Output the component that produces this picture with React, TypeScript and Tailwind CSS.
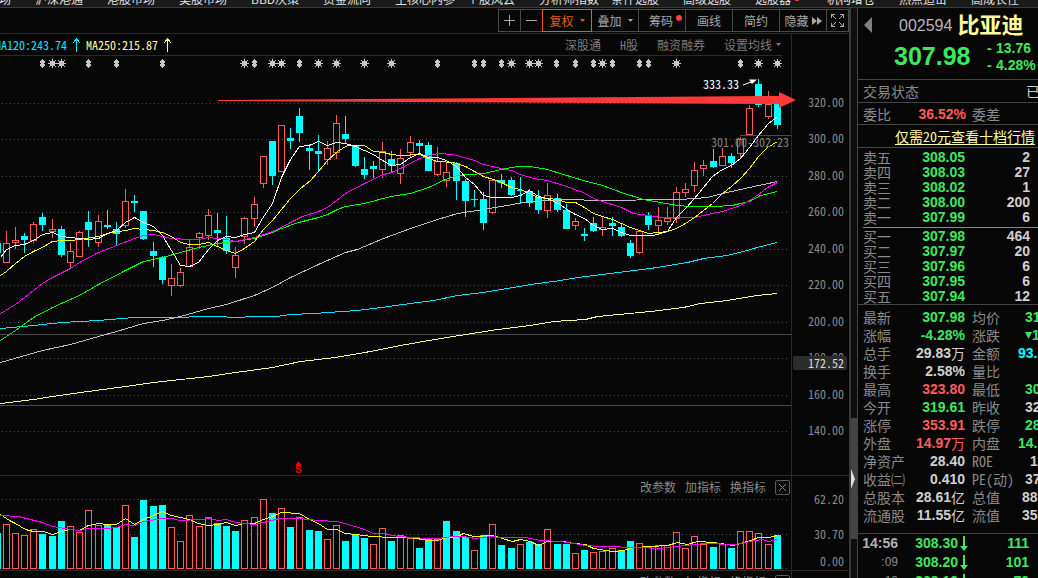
import React from "react";

type Candle = [hi: number, lo: number, top: number, bottom: number, up: 0 | 1];

const candles: Candle[] = [
  [231, 263, 243, 263, 1], [227, 249, 240, 243, 1], [233, 253, 236, 240, 0], [222, 243, 224, 241, 1],
  [213, 231, 217, 225, 0], [219, 238, 229, 232, 1], [226, 257, 229, 255, 0], [243, 269, 251, 263, 1],
  [231, 257, 232, 257, 1], [211, 247, 222, 230, 0], [215, 247, 221, 243, 1], [210, 229, 225, 227, 0],
  [222, 246, 229, 234, 0], [189, 228, 201, 226, 1], [195, 212, 201, 203, 0], [211, 240, 211, 239, 0],
  [242, 267, 251, 256, 0], [256, 284, 257, 280, 0], [264, 296, 278, 286, 1], [268, 287, 272, 286, 1],
  [240, 267, 247, 267, 1], [232, 249, 233, 238, 1], [209, 240, 215, 236, 1], [213, 246, 230, 233, 0],
  [216, 254, 238, 251, 0], [247, 278, 255, 268, 1], [217, 244, 218, 237, 1], [197, 227, 204, 219, 1],
  [156, 188, 156, 184, 1], [141, 185, 141, 176, 0], [125, 172, 125, 172, 1], [128, 149, 138, 141, 0],
  [108, 142, 116, 133, 0], [144, 170, 148, 151, 0], [135, 172, 151, 154, 0], [141, 165, 148, 160, 1],
  [115, 159, 123, 153, 1], [116, 143, 134, 139, 0], [145, 167, 145, 166, 0], [157, 179, 169, 175, 0],
  [161, 178, 166, 169, 0], [142, 178, 151, 170, 1], [151, 172, 159, 166, 0], [149, 184, 158, 174, 1],
  [136, 157, 142, 153, 1], [140, 155, 143, 146, 0], [142, 171, 145, 171, 0], [147, 176, 161, 175, 1],
  [162, 187, 172, 181, 1], [162, 200, 163, 181, 0], [179, 217, 181, 201, 0], [190, 207, 199, 200, 0],
  [192, 230, 199, 223, 0], [179, 214, 180, 213, 1], [174, 188, 180, 183, 0], [177, 196, 180, 195, 0],
  [177, 203, 190, 191, 0], [189, 207, 191, 203, 0], [190, 214, 197, 210, 0], [183, 218, 195, 211, 1],
  [194, 212, 198, 210, 0], [204, 229, 210, 229, 0], [218, 230, 221, 226, 1], [228, 241, 234, 236, 0],
  [217, 232, 223, 231, 0], [217, 236, 227, 230, 1], [217, 236, 223, 226, 0], [223, 237, 227, 236, 0],
  [240, 258, 243, 256, 0], [231, 254, 231, 253, 1], [212, 230, 216, 225, 0], [207, 234, 220, 226, 1],
  [207, 225, 218, 222, 1], [187, 223, 192, 219, 1], [183, 197, 189, 193, 1], [162, 192, 170, 186, 1],
  [160, 176, 165, 169, 1], [149, 168, 161, 167, 0], [148, 166, 156, 166, 1], [153, 168, 156, 163, 0],
  [137, 159, 139, 154, 1], [105, 135, 108, 135, 1], [79, 107, 84, 105, 0], [91, 119, 104, 117, 1],
  [101, 129, 101, 125, 0],
];

const volumes: [top: number, up: 0 | 1][] = [
  [524, 1], [533, 1], [535, 1], [529, 1], [534, 0], [536, 0], [521, 0], [526, 1], [532, 1], [510, 1],
  [525, 1], [524, 0], [527, 0], [505, 1], [537, 0], [500, 0], [506, 0], [505, 0], [527, 1], [541, 1],
  [515, 1], [526, 1], [517, 1], [523, 0], [526, 0], [531, 0], [520, 1], [517, 1], [499, 1], [513, 0],
  [508, 1], [527, 0], [517, 1], [530, 0], [531, 0], [539, 1], [525, 1], [541, 0], [534, 0], [538, 0],
  [544, 1], [528, 1], [541, 0], [535, 1], [538, 1], [548, 0], [539, 0], [539, 1], [521, 0], [531, 0],
  [537, 0], [550, 1], [535, 0], [524, 1], [545, 0], [548, 0], [544, 1], [542, 0], [544, 0], [529, 1],
  [544, 0], [544, 0], [553, 1], [550, 0], [552, 1], [551, 1], [548, 1], [550, 0], [541, 0], [543, 1],
  [547, 1], [545, 1], [545, 1], [532, 1], [548, 1], [536, 1], [544, 1], [547, 0], [544, 1], [548, 0],
  [531, 1], [531, 1], [533, 1], [544, 1], [535, 0],
];

const colX = (i: number) => Math.floor(6.22 + 9.18 * i);

const averages: { color: string; points: string }[] = [
  { color: "#ffff99", points: "0,403 33,399 52,396 80,392 125,386 153,382 208,376 235,372 272,367 300,361 335,357 370,351 400,345 440,338 497,329 530,325 553,321 585,319 597,316 650,311 683,307 700,303 727,300 757,295 777,293" },
  { color: "#00e5ff", points: "0,328 33,325 61,322 98,320 134,317 180,317 198,316 217,316 235,317 254,316 276,316 290,314 313,313 357,310 373,308 410,303 433,300 457,295 483,292 501,289 530,284 560,280 577,277 610,273 650,268 687,262 703,258 727,255 750,249 760,246 777,242" },
  { color: "#c0c0c0", points: "0,362 42,350 70,344 98,336 116,331 143,323 162,320 180,316 208,308 226,304 254,295 272,287 290,277 318,264 345,252 357,249 383,238 410,228 437,219 457,213 483,209 501,206 523,202 547,200 573,199 593,200 680,199 707,197 722,193 749,187 777,181" },
  { color: "#00ff00", points: "0,340 15,330 33,317 52,307 79,295 98,284 125,270 143,261 162,257 180,252 198,247 217,243 235,241 254,238 272,232 281,228 298,222 318,217 327,214 337,209 345,206 364,203 390,196 410,193 428,187 445,179 457,175 483,173 501,169 517,166 530,166 547,169 563,174 583,180 602,185 621,192 643,199 660,202 677,205 690,206 713,206 732,205 740,203 749,201 760,195 777,191" },
  { color: "#ff00ff", points: "0,313 15,304 24,297 42,283 52,277 70,268 79,262 98,252 116,245 134,238 143,235 153,234 162,236 171,238 189,239 198,239 208,237 226,239 235,241 254,237 272,231 281,227 290,222 302,216 318,211 327,207 345,193 364,183 383,174 391,172 400,168 419,158 437,153 453,154 474,160 483,164 501,168 511,170 520,174 533,178 547,180 563,185 583,192 593,198 602,201 621,207 633,213 648,215 660,217 676,217 694,217 712,213 722,211 740,205 749,200 758,194 767,187 777,182" },
  { color: "#ffff00", points: "0,275 6,271 15,263 24,256 33,251 42,247 52,241 61,240 70,240 79,239 98,236 107,233 125,230 134,228 153,230 162,232 171,236 180,242 189,244 198,244 208,242 217,246 226,250 235,253 244,248 254,241 263,229 272,220 281,209 290,198 300,188 310,180 318,171 327,160 337,151 347,145 364,145 373,151 383,152 391,154 400,155 420,154 428,158 437,161 453,162 465,166 474,171 483,176 493,179 501,182 511,187 520,189 529,193 538,197 557,199 566,202 575,202 584,207 593,213 602,216 612,219 621,223 630,227 639,230 648,233 667,231 676,228 685,223 694,217 703,210 712,203 722,193 731,186 740,178 749,168 758,156 767,147 777,141" },
  { color: "#ffffff", points: "0,257 6,249 15,245 24,244 33,240 42,234 52,232 61,236 70,237 79,238 88,239 98,238 107,233 116,230 125,222 134,217 143,222 153,226 162,235 171,250 180,265 189,266 198,262 208,249 217,240 226,236 235,237 244,234 254,232 262,218 272,203 281,177 290,159 299,146 309,145 318,141 327,145 336,142 345,143 355,146 364,150 373,154 382,160 391,165 400,164 410,157 419,153 428,157 437,157 446,160 456,166 465,177 474,184 483,195 492,197 511,197 520,195 529,190 538,196 547,198 560,204 566,209 575,214 584,218 593,225 602,229 612,228 621,232 630,235 653,235 667,231 676,217 685,208 694,198 703,187 712,176 722,169 731,165 740,158 749,147 758,135 768,123 777,116" },
];

const volumeAverages: { color: string; points: string }[] = [
  { color: "#ffff00", points: "0,514 9,520 15,523 25,529 33,531 43,531 52,534 61,531 70,529 79,530 88,525 98,523 107,524 116,524 125,518 134,524 143,519 153,515 162,511 171,515 180,517 189,519 198,523 208,525 217,524 226,522 235,525 244,523 254,523 263,519 272,516 281,512 299,513 309,519 318,523 327,529 336,529 345,533 355,534 372,536 391,537 410,537 428,540 437,540 446,537 455,537 463,533 473,536 492,535 502,538 512,541 520,539 530,541 538,545 547,541 563,541 573,543 585,544 593,548 612,551 623,550 633,547 667,545 677,542 687,544 697,541 713,542 733,545 750,540 758,537 768,537 777,535" },
  { color: "#ff00ff", points: "0,515 18,516 42,522 52,526 70,529 79,530 88,528 107,528 116,527 125,524 134,525 143,521 162,518 171,518 180,520 199,519 210,518 217,520 226,519 235,522 254,524 263,522 279,518 299,518 318,520 336,521 345,523 364,529 373,533 385,533 391,535 410,537 428,538 437,538 452,536 463,536 475,538 490,536 500,537 525,537 540,540 560,541 573,543 585,545 600,546 640,547 658,548 685,545 705,543 735,544 750,541 762,539 768,541 777,539" },
];

const starMarks = [52, 61, 244, 272, 281, 318, 336, 364, 391, 511, 529, 538, 602, 676, 758, 777];
const barMarks = [42, 88, 116, 162, 254, 299, 437, 474, 483, 501, 556, 575, 593, 612, 639, 648, 740];

const navItems = [
  "科创市场", "沪深港通", "港股市场", "美股市场", "BBD决策", "资金流向", "主核心内参", "个股风云",
  "分析师指数", "条件选股", "高级选股", "选股器", "机构增仓", "热点追击", "高成长性",
];

const RED = "#ff5c5c";
const CYAN = "#00ffff";

function Dots({ y }: { y: number }) {
  return <line x1="2" x2="790" y1={y + 0.5} y2={y + 0.5} stroke="#505050" strokeDasharray="1 3" />;
}

function Lines({ items }: { items: { color: string; points: string }[] }) {
  return (
    <g transform="translate(0.5 0.5)" fill="none">
      {items.map((a) => (
        <polyline key={a.color} points={a.points} stroke={a.color} strokeWidth="1" />
      ))}
    </g>
  );
}

function PriceChart() {
  return (
    <svg viewBox="0 56 791 419" preserveAspectRatio="none" className="block h-full w-full overflow-visible" shapeRendering="crispEdges">
      {[103, 139, 176, 212, 249, 285, 322, 358, 395, 431].map((y) => <Dots key={y} y={y} />)}
      <path d="M0 334.5H791M0 405.5H791M740 135.5H791" stroke="#4a4a4a" />
      <rect x="0" y="243" width="1" height="10" fill={CYAN} />
      {candles.map(([hi, lo, top, bottom, up], i) => {
        const x = colX(i);
        const color = up ? RED : CYAN;
        return (
          <g key={i} fill={color}>
            <rect x={x} y={hi} width="1" height={Math.max(0, top - hi)} />
            <rect x={x} y={bottom} width="1" height={Math.max(0, lo - bottom)} />
            {up ? (
              <rect x={x - 2.5} y={top + 0.5} width="6" height={bottom - top - 1} fill="none" stroke={color} />
            ) : (
              <rect x={x - 3} y={top} width="7" height={bottom - top} />
            )}
          </g>
        );
      })}
      <Lines items={averages} />
      <g fill="#c8c8c8" stroke="#c8c8c8">
        {starMarks.map((x) => (
          <g key={x} transform={`translate(${x} 63)`}>
            <rect x="-2" y="-2" width="5" height="5" stroke="none" />
            <path d="M0.5 -4V5M-4 0.5H5" />
            <path d="M-3 -3h1v1h-1zM3 -3h1v1h-1zM-3 3h1v1h-1zM3 3h1v1h-1z" stroke="none" />
          </g>
        ))}
        {barMarks.map((x) => (
          <path key={x} transform={`translate(${x} 63)`} d="M0 -4h1v1h1v1h1v2h-1v1h1v2h-1v1h-1v1h-1v-1h-1v-1h-1v-2h1v-1h-1v-2h1v-1h1z" stroke="none" />
        ))}
      </g>
      <g className="font-['Noto_Sans_CJK_SC',sans-serif] text-[12px] [font-feature-settings:'hwid']">
        <text x="703" y="89" fill="#ffffff">333.33</text>
        <text x="711" y="147" fill="#808080">301.00-302.23</text>
      </g>
      <g shapeRendering="auto">
        <path d="M743 85L754 81" stroke="#ffffff" fill="none" />
        <path d="M757 79.500L749 79.500L752 84Z" fill="#ffffff" />
        <path d="M218 100L779 96V92L796 100L779 108V104L218 101Z" fill="#ff3838" />
        <path d="M298.500 461.500L302 465.500H295Z" fill="#ff0000" />
      </g>
      <text x="295" y="473" fill="#ff0000" className="font-['Liberation_Sans',sans-serif] text-[10px] font-bold">S</text>
    </svg>
  );
}

function VolumeChart() {
  return (
    <svg viewBox="0 476 791 94" preserveAspectRatio="none" className="block h-full w-full" shapeRendering="crispEdges">
      {[499, 534, 568].map((y) => <Dots key={y} y={y} />)}
      <rect x="0" y="533" width="1" height="36" fill={CYAN} />
      {volumes.map(([top, up], i) => {
        const x = colX(i);
        return up ? (
          <rect key={i} x={x - 2.5} y={top + 0.5} width="6" height={568 - top} fill="#070707" stroke={RED} />
        ) : (
          <rect key={i} x={x - 3} y={top} width="7" height={569 - top} fill={CYAN} />
        );
      })}
      <Lines items={volumeAverages} />
    </svg>
  );
}

function UpArrow() {
  return (
    <svg width="9" height="15" viewBox="0 0 9 15" fill="none" stroke="currentColor" shapeRendering="crispEdges">
      <path d="M4.500 1V15M1 6L4.500 1.500L8 6" />
    </svg>
  );
}

function Caret() {
  return (
    <svg width="5" height="3" viewBox="0 0 5 3" fill="currentColor">
      <path d="M0 0h5L2.500 3z" />
    </svg>
  );
}

function ToolButton({ className, children, label }: { className: string; children: React.ReactNode; label?: string }) {
  return (
    <button aria-label={label} className={`flex h-[23px] items-center justify-center border text-[12px] leading-4 ${className}`}>
      {children}
    </button>
  );
}

const plain = "-ml-px border-[#4a4a4a] text-[#a8a8a8]";

function Toolbar() {
  return (
    <div className="flex h-[26px] items-center justify-end border-b border-[#2a2a2a]">
      <ToolButton label="放大" className={`w-[23px] ${plain}`}>
        <svg width="11" height="11" stroke="currentColor" shapeRendering="crispEdges"><path d="M5.500 0V11M0 5.500H11" /></svg>
      </ToolButton>
      <ToolButton label="缩小" className={`w-[23px] ${plain}`}>
        <svg width="11" height="11" stroke="currentColor" shapeRendering="crispEdges"><path d="M0 5.500H11" /></svg>
      </ToolButton>
      <ToolButton className="z-10 -ml-px w-[50px] gap-1.5 border-[#e8600c] text-[#e8600c]">复权<Caret /></ToolButton>
      <ToolButton className={`w-[48px] gap-1.5 ${plain}`}>叠加<Caret /></ToolButton>
      <ToolButton className={`relative w-[48px] pr-1.5 pl-1 ${plain}`}>
        筹码
        <span className="absolute top-[5px] right-[3px] size-1.5 rounded-full bg-[#ff4040]" />
      </ToolButton>
      <ToolButton className={`w-[48px] ${plain}`}>画线</ToolButton>
      <ToolButton className={`w-[48px] ${plain}`}>简约</ToolButton>
      <ToolButton className={`w-[48px] gap-[3px] ${plain}`}>
        隐藏
        <svg width="10" height="8" viewBox="0 0 10 8" fill="currentColor"><path d="M0 0L5 4L0 8zM5 0L10 4L5 8z" /></svg>
      </ToolButton>
      <ToolButton label="全屏" className={`w-[23px] ${plain}`}>
        <svg width="13" height="13" viewBox="0 0 13 13" fill="none" stroke="currentColor" shapeRendering="crispEdges">
          <path d="M0.500 4V0.500H4M9 0.500H12.500V4M12.500 9V12.500H9M4 12.500H0.500V9M1 1L5 5M12 1L8 5M12 12L8 8M1 12L5 8" />
        </svg>
      </ToolButton>
    </div>
  );
}

function PaneActions() {
  return (
    <div className="flex items-center justify-end gap-[9px] pr-px text-[12px] leading-4 text-[#8a8a8a]">
      <button>改参数</button>
      <button>加指标</button>
      <button>换指标</button>
      <button aria-label="关闭" className="flex size-[15px] items-center justify-center rounded-[2px] border border-[#5a5a5a]">
        <svg width="7" height="7" viewBox="0 0 7 7" stroke="currentColor"><path d="M0 0L7 7M7 0L0 7" /></svg>
      </button>
    </div>
  );
}

const NUM = "font-['Liberation_Sans',sans-serif] font-bold";

const sells = [["卖五", "308.05", "2"], ["卖四", "308.03", "27"], ["卖三", "308.02", "1"], ["卖二", "308.00", "200"], ["卖一", "307.99", "6"]];
const buys = [["买一", "307.98", "464"], ["买二", "307.97", "20"], ["买三", "307.96", "6"], ["买四", "307.95", "6"], ["买五", "307.94", "12"]];

const G = "text-[#3fe65f]";
const R = "text-[#ff5c5c]";
const W = "text-[#d0d0d0]";
const C = "text-[#00ffff]";

const stats: [string, string, string, string, string, string, string][] = [
  ["最新", "307.98", "", G, "均价", "31", `${G} left-[60px]`],
  ["涨幅", "-4.28%", "", G, "涨跌", "▼1", `${G} left-[60px]`],
  ["总手", "29.83", "万", W, "金额", "93.", `${C} left-[53px]`],
  ["换手", "2.58%", "", W, "量比", "", `${W} left-[60px]`],
  ["最高", "323.80", "", R, "最低", "30", `${G} left-[60px]`],
  ["今开", "319.61", "", G, "昨收", "32", `${W} left-[60px]`],
  ["涨停", "353.91", "", R, "跌停", "28", `${G} left-[60px]`],
  ["外盘", "14.97", "万", R, "内盘", "14.", `${G} left-[53px]`],
  ["净资产", "28.40", "", W, "ROE", "1", `${W} left-[65px]`],
  ["收益㈡", "0.410", "", W, "PE(动)", "37", `${W} left-[60px]`],
  ["总股本", "28.61", "亿", W, "总值", "88", `${W} left-[57px]`],
  ["流通股", "11.55", "亿", W, "流值", "35", `${W} left-[57px]`],
];

function BookTable({ rows }: { rows: string[][] }) {
  return (
    <table className="w-full table-fixed border-collapse">
      <tbody>
        {rows.map(([label, price, qty]) => (
          <tr key={label} className="h-[15px] leading-[15px]">
            <th scope="row" className="w-[37px] p-0 pl-[5px] text-left font-normal whitespace-nowrap text-[#8a8a8a]">{label}</th>
            <td className={`w-[70px] p-0 text-right ${NUM} ${G}`}>{price}</td>
            <td className={`p-0 pr-2 text-right ${NUM} ${W}`}>{qty}</td>
          </tr>
        ))}
      </tbody>
    </table>
  );
}

const trades = [["14:56", "308.30", "111"], [":09", "308.20", "101"], [":12", "308.10", "70"]];

function QuotePanel() {
  return (
    <aside className="flex w-[181px] shrink-0 flex-col overflow-hidden border-l border-[#444] text-[14px] [font-feature-settings:'hwid']">
      <header className="h-[72px] shrink-0 border-b border-[#444] pt-1">
        <div className="flex h-[26px] items-center">
          <button aria-label="上一只" className="ml-1.5 text-[#808080]">
            <svg width="8" height="16" viewBox="0 0 8 16" fill="currentColor"><path d="M8 0V16L0 8z" /></svg>
          </button>
          <span className="ml-[27px] pt-0.5 font-['Liberation_Sans',sans-serif] text-[16px] text-[#b8b8b8]">002594</span>
          <h1 className="ml-[5px] pb-1 text-[22px] leading-[22px] font-bold whitespace-nowrap text-[#ffff99]">比亚迪</h1>
        </div>
        <div className={`flex items-center ${NUM} ${G}`}>
          <span className="w-[129px] pl-9 text-[25px] leading-[36px]">307.98</span>
          <span className="grid grid-cols-[9px_auto] pt-0.5 leading-[17px]">
            <span>-</span><span>13.76</span>
            <span>-</span><span>4.28%</span>
          </span>
        </div>
      </header>
      <div className="flex h-[23px] shrink-0 items-center overflow-hidden border-b border-[#444] pl-[5px] leading-[18px] whitespace-nowrap text-[#8a8a8a]">
        <span className="w-[163px] shrink-0">交易状态</span>
        <span className="shrink-0 text-[#d0d0d0]">已</span>
      </div>
      <div className="flex h-[22px] shrink-0 items-center border-b border-[#444] pl-[5px] leading-[18px] whitespace-nowrap text-[#8a8a8a]">
        委比<span className={`w-[75px] text-right ${NUM} ${R}`}>36.52%</span>
        <span className="ml-1.5">委差</span>
      </div>
      <div className="flex h-[23px] shrink-0 items-center justify-end border-b border-[#444] pr-[3px] whitespace-nowrap">
        <a href="#level2" className="leading-[18px] text-[#ffff99] underline underline-offset-2">仅需20元查看十档行情</a>
      </div>
      <section className="shrink-0 border-b border-[#444] pt-[2px]">
        <BookTable rows={sells} />
        <div className="mt-[2px] mb-px ml-[5px] h-px bg-[#8a8a8a]" />
        <BookTable rows={buys} />
      </section>
      <section className="h-[229px] shrink-0 border-b border-[#444] pt-[3px]">
        <table className="w-full table-fixed border-collapse">
          <tbody>
            {stats.map(([label, value, unit, tone, label2, value2, tone2]) => (
              <tr key={label} className="h-[18px] leading-[18px] whitespace-nowrap">
                <th scope="row" className="w-[47px] p-0 pl-[5px] text-left font-normal text-[#8a8a8a]">{label}</th>
                <td className={`w-[60px] p-0 ${tone}`}>
                  <div className="flex h-[18px] items-center justify-end">
                    <span className={NUM}>{value}</span>
                    {unit && <span>{unit}</span>}
                  </div>
                </td>
                <td className="p-0 text-[#8a8a8a]">
                  <div className="relative flex h-[18px] items-center pl-[7px]">
                    <span>{label2}</span>
                    <span className={`absolute flex items-center ${NUM} ${tone2}`}>
                      {value2.startsWith("▼") ? (
                        <>
                          <svg width="7" height="7" viewBox="0 0 7 7" fill="currentColor" aria-label="下跌"><path d="M0 0h7L3.500 7z" /></svg>
                          {value2.slice(1)}
                        </>
                      ) : (
                        value2
                      )}
                    </span>
                  </div>
                </td>
              </tr>
            ))}
          </tbody>
        </table>
      </section>
      <table className={`w-full shrink-0 table-fixed border-collapse ${NUM}`}>
        <tbody>
          {trades.map(([time, price, qty], i) => (
            <tr key={time} className="h-[19px] leading-[19px]">
              <td className={`w-[40px] p-0 text-right ${i === 0 ? "text-[#b0b0b0]" : "text-[12px] font-normal text-[#8a8a8a]"}`}>{time}</td>
              <td className={`w-[70px] p-0 ${G}`}>
                <span className="flex items-center justify-end gap-0.5">
                  {price}
                  <svg width="8" height="15" viewBox="0 0 8 15" fill="currentColor"><path d="M3 0h2v10h3L4 15L0 10h3z" /></svg>
                </span>
              </td>
              <td className={`p-0 pr-[9px] text-right ${G}`}>{qty}</td>
            </tr>
          ))}
        </tbody>
      </table>
    </aside>
  );
}

export default function App() {
  return (
    <div className="flex h-screen flex-col overflow-hidden bg-[#070707] font-['Noto_Sans_CJK_SC',sans-serif]">
      <nav className="flex h-2 shrink-0 items-end overflow-hidden border-b border-[#3a3a3a] bg-[#1a1a1a] text-[12px] leading-4 text-[#e0e0e0]">
        <div className="-ml-[37px] flex">
          {navItems.map((item) => (
            <a key={item} href="#nav" className="relative w-[72px] shrink-0 whitespace-nowrap">
              {item}
              {item === "选股器" && <span className="absolute top-1 left-[39px] size-1.5 rounded-full bg-[#ff4040]" />}
            </a>
          ))}
        </div>
      </nav>
      <div className="flex min-h-0 flex-1">
        <main className="flex min-w-0 flex-1 flex-col">
          <Toolbar />
          <div className="flex min-h-0 flex-1">
            <div className="relative z-10 flex min-w-0 flex-1 flex-col">
              <div className="mr-[9px] flex h-[22px] shrink-0 items-center justify-between border-b border-[#2a2a2a] text-[12px] leading-4 whitespace-nowrap">
                <div className="-ml-[5px] flex items-center gap-[5px] [font-feature-settings:'hwid']">
                  <span className="flex items-center gap-[5px] text-[#00e5ff]">MA120:243.74 <UpArrow /></span>
                  <span className="flex items-center gap-[5px] text-[#ffff99]">MA250:215.87 <UpArrow /></span>
                </div>
                <div className="flex items-center gap-[19px] text-[#7c7c7c] [font-feature-settings:'hwid']">
                  <button>深股通</button>
                  <button>H股</button>
                  <button>融资融券</button>
                  <button className="flex items-center gap-1 pr-px">设置均线<Caret /></button>
                </div>
              </div>
              <div className="min-h-0 flex-1"><PriceChart /></div>
              <div className="relative h-[96px] shrink-0 border-y border-[#2a2a2a]">
                <VolumeChart />
                <div className="absolute top-[3px] right-0"><PaneActions /></div>
              </div>
              <div className="h-[7px] shrink-0 overflow-hidden pt-[3px]"><PaneActions /></div>
            </div>
            <div className="flex w-[58px] shrink-0 flex-col border-l border-[#2a2a2a] text-right text-[12px] leading-4 text-[#8a8a8a] [font-feature-settings:'hwid']">
              <div className="relative flex min-h-0 flex-1 flex-col justify-between pt-[60px] pr-[5px] pb-[37px]">
                {["320.00", "300.00", "280.00", "260.00", "240.00", "220.00", "200.00", "180.00", "160.00", "140.00"].map((p) => (
                  <span key={p}>{p}</span>
                ))}
                <span className="absolute bottom-[105px] left-px h-[14px] w-[54px] rounded-[2px] bg-[#2c2c2c] pr-[3px] leading-[14px] text-[#d8d8d8]">172.52</span>
              </div>
              <div className="flex h-[96px] shrink-0 flex-col border-y border-[#2a2a2a] pt-[15px] pr-[5px]">
                <span>62.20</span>
                <span className="mt-[19px]">30.70</span>
                <span className="mt-[11px]">0.00</span>
              </div>
              <div className="h-[7px] shrink-0" />
            </div>
          </div>
        </main>
        <div className="flex w-2 shrink-0 flex-col border-l-2 border-[#3a3a3a] bg-[#0e0e0e]">
          <div className="min-h-0 flex-1" />
          <button aria-label="展开" className="flex h-[121px] shrink-0 items-center justify-start bg-[#444]">
            <svg width="4" height="20" viewBox="0 0 4 20" fill="#e0e0e0"><path d="M0 0L4 10L0 20z" /></svg>
          </button>
          <div className="h-[39px] shrink-0" />
        </div>
        <QuotePanel />
      </div>
    </div>
  );
}
